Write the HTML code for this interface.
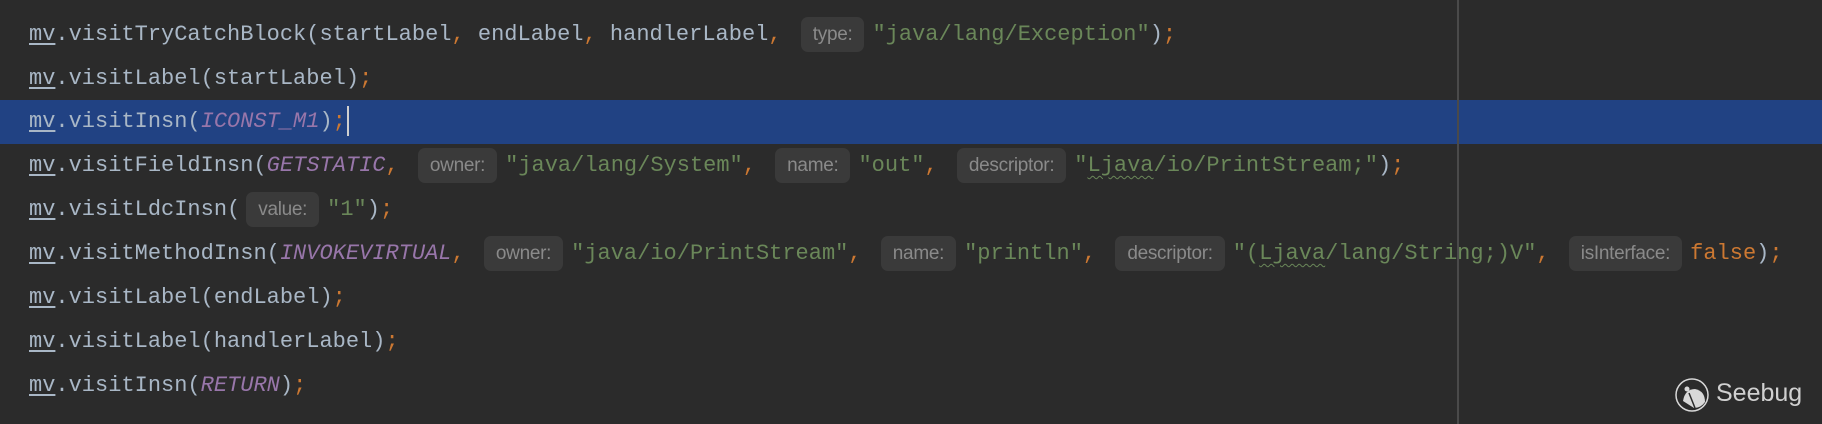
<!DOCTYPE html>
<html><head><meta charset="utf-8"><style>
html,body{margin:0;padding:0}
body{width:1822px;height:424px;background:#2b2b2b;position:relative;overflow:hidden;font-family:"Liberation Mono","DejaVu Sans Mono",monospace;font-size:22px;color:#a9b7c6}
.ln{position:absolute;left:29px;height:44px;line-height:44px;white-space:pre}
.hl{position:absolute;left:0;top:100px;width:1822px;height:44px;background:#214283}
.o{color:#cc7832}.p{color:#9876aa;font-style:italic}.s{color:#6a8759}
.u{text-decoration:underline;text-decoration-color:#a9b7c6;text-underline-offset:3px}
.w{text-decoration:underline wavy #6a8759;text-underline-offset:4px;text-decoration-thickness:1px}
.h{display:inline-block;font-family:"Liberation Sans",sans-serif;font-size:19px;letter-spacing:-0.3px;color:#8a8a8a;background:#3a3a3a;border-radius:7px;height:35px;line-height:35px;padding:0 12px;margin:0 8px 0 6px;vertical-align:middle;position:relative;top:0}
.vl{position:absolute;left:1457px;top:0;width:2px;height:424px;background:#4a4a4a}
.caret{display:inline-block;width:2px;height:30px;background:#cfcfcf;vertical-align:middle;margin-left:1px}
</style></head><body>
<div class="hl"></div>
<div class="vl"></div>
<div class="ln" style="top:13px"><span class="u">mv</span>.visitTryCatchBlock(startLabel<span class="o">,</span> endLabel<span class="o">,</span> handlerLabel<span class="o">,</span> <span class="h">type:</span><span class="s">"java/lang/Exception"</span>)<span class="o">;</span></div>
<div class="ln" style="top:57px"><span class="u">mv</span>.visitLabel(startLabel)<span class="o">;</span></div>
<div class="ln" style="top:100px"><span class="u">mv</span>.visitInsn(<span class="p">ICONST_M1</span>)<span class="o">;</span><span class="caret"></span></div>
<div class="ln" style="top:144px"><span class="u">mv</span>.visitFieldInsn(<span class="p">GETSTATIC</span><span class="o">,</span> <span class="h">owner:</span><span class="s">"java/lang/System"</span><span class="o">,</span> <span class="h">name:</span><span class="s">"out"</span><span class="o">,</span> <span class="h">descriptor:</span><span class="s">"<span class="w">Ljava</span>/io/PrintStream;"</span>)<span class="o">;</span></div>
<div class="ln" style="top:188px"><span class="u">mv</span>.visitLdcInsn(<span class="h">value:</span><span class="s">"1"</span>)<span class="o">;</span></div>
<div class="ln" style="top:232px"><span class="u">mv</span>.visitMethodInsn(<span class="p">INVOKEVIRTUAL</span><span class="o">,</span> <span class="h">owner:</span><span class="s">"java/io/PrintStream"</span><span class="o">,</span> <span class="h">name:</span><span class="s">"println"</span><span class="o">,</span> <span class="h">descriptor:</span><span class="s">"(<span class="w">Ljava</span>/lang/String;)V"</span><span class="o">,</span> <span class="h">isInterface:</span><span class="o">false</span>)<span class="o">;</span></div>
<div class="ln" style="top:276px"><span class="u">mv</span>.visitLabel(endLabel)<span class="o">;</span></div>
<div class="ln" style="top:320px"><span class="u">mv</span>.visitLabel(handlerLabel)<span class="o">;</span></div>
<div class="ln" style="top:364px"><span class="u">mv</span>.visitInsn(<span class="p">RETURN</span>)<span class="o">;</span></div>
<svg style="position:absolute;left:1673px;top:375px" width="40" height="40" viewBox="0 0 40 40">
<circle cx="19" cy="20" r="16" fill="none" stroke="#d8d8d8" stroke-width="1.5"/>
<path d="M10 26 Q12 14 22 14 Q32 16 32 27 Q28 33 21 33 Z" fill="#d8d8d8"/>
<path d="M16 18 L22 33" stroke="#2b2b2b" stroke-width="1.5"/>
<circle cx="14" cy="14" r="2.5" fill="#d8d8d8"/>
</svg>
<div style="position:absolute;left:1716px;top:378px;font-family:'Liberation Sans',sans-serif;font-size:25px;color:#d0d0d0;line-height:30px">Seebug</div>
</body></html>
